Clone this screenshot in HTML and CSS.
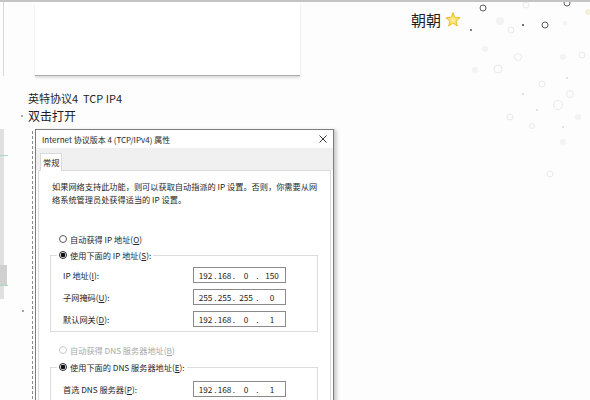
FILE: index.html
```html
<!DOCTYPE html>
<html lang="zh-CN">
<head>
<meta charset="utf-8">
<title>TCP/IPv4</title>
<link rel="stylesheet" href="styles.css">
</head>
<body>
<div class="screen">
  <div class="top"><div class="paper"></div></div>

  <div class="notes">
    <p class="note note-a">英特协议4&nbsp;&nbsp;TCP IP4</p>
    <p class="note note-b"><span class="bullet"></span>双击打开</p>
  </div>

  <div class="workspace">
    <div class="edge"></div>
    <div class="gutter"><span class="dot"></span></div>
    <div class="rail"></div>
    <div class="dialog">
      <div class="titlebar">
        <span class="title">Internet 协议版本 4 (TCP/IPv4) 属性</span>
        <svg class="close" width="8" height="8" viewBox="0 0 8 8"><path d="M0.5 0.5L7.5 7.5M7.5 0.5L0.5 7.5" stroke="#3a3a3a" stroke-width="1" fill="none"/></svg>
      </div>
      <div class="tabstrip"><span class="tab">常规</span></div>
      <div class="pane">
        <p class="intro">如果网络支持此功能，则可以获取自动指派的 IP 设置。否则，你需要从网<br>络系统管理员处获得适当的 IP 设置。</p>

        <div class="radio first"><span class="rb"></span>自动获得 IP 地址(<u>O</u>)</div>
        <fieldset class="group">
          <legend class="radio"><span class="rb on"></span>使用下面的 IP 地址(<u>S</u>):</legend>
          <div class="rows">
            <span class="lbl">IP 地址(<u>I</u>):</span>
            <span class="ip"><i>192</i><b>.</b><i>168</i><b>.</b><i>0</i><b>.</b><i>150</i></span>
            <span class="lbl">子网掩码(<u>U</u>):</span>
            <span class="ip"><i>255</i><b>.</b><i>255</i><b>.</b><i>255</i><b>.</b><i>0</i></span>
            <span class="lbl">默认网关(<u>D</u>):</span>
            <span class="ip"><i>192</i><b>.</b><i>168</i><b>.</b><i>0</i><b>.</b><i>1</i></span>
          </div>
        </fieldset>

        <div class="radio off"><span class="rb"></span>自动获得 DNS 服务器地址(<u>B</u>)</div>
        <fieldset class="group">
          <legend class="radio"><span class="rb on"></span>使用下面的 DNS 服务器地址(<u>E</u>):</legend>
          <div class="rows dns">
            <span class="lbl">首选 DNS 服务器(<u>P</u>):</span>
            <span class="ip"><i>192</i><b>.</b><i>168</i><b>.</b><i>0</i><b>.</b><i>1</i></span>
          </div>
        </fieldset>
      </div>
    </div>
  </div>

  <div class="badge">
    <span class="name">朝朝</span>
    <svg class="star" width="16" height="16" viewBox="0 0 16 16">
      <defs>
        <radialGradient id="sg" cx="50%" cy="55%" r="60%">
          <stop offset="0" stop-color="#fff3a8"/>
          <stop offset="1" stop-color="#f3c21c"/>
        </radialGradient>
      </defs>
      <polygon points="8,0.5 9.94,5.33 15.13,5.68 11.14,9.02 12.41,14.07 8,11.3 3.59,14.07 4.86,9.02 0.87,5.68 6.06,5.33" fill="url(#sg)" stroke="#e7b20f" stroke-width="0.7" stroke-linejoin="round"/>
    </svg>
  </div>

  <svg class="sparkles" width="130" height="180" viewBox="0 0 130 180">
    <g fill="none" stroke="#4a4a4a" stroke-width="0.9">
      <circle cx="23" cy="6" r="3"/>
      <circle cx="85" cy="23" r="3"/>
      <circle cx="107" cy="1" r="3"/>
    </g>
    <g fill="#444">
      <circle cx="11" cy="28" r="0.9"/>
      <circle cx="63" cy="23" r="1"/>
    </g>
    <g fill="none" stroke="#e6e6e6" stroke-width="0.9">
      <circle cx="66" cy="3" r="3"/>
      <circle cx="51" cy="28" r="3"/>
      <circle cx="58" cy="55" r="3.5"/>
      <circle cx="122" cy="53" r="3"/>
      <circle cx="38" cy="67" r="4"/>
      <circle cx="82" cy="82" r="3"/>
      <circle cx="110" cy="92" r="3.5"/>
      <circle cx="98" cy="103" r="4.5"/>
      <circle cx="50" cy="115" r="3"/>
      <circle cx="90" cy="172" r="3"/>
      <circle cx="72" cy="124" r="2.5"/>
    </g>
    <g fill="#f3f3f3">
      <circle cx="40" cy="19" r="4"/>
      <circle cx="105" cy="21" r="2"/>
      <circle cx="25" cy="47" r="3"/>
      <circle cx="15" cy="68" r="3"/>
      <circle cx="103" cy="55" r="3"/>
      <circle cx="118" cy="115" r="3"/>
      <circle cx="103" cy="140" r="3"/>
    </g>
    <circle cx="128" cy="10" r="3" fill="#f5f1d6"/>
    <g fill="#d4d4d4">
      <circle cx="63" cy="92" r="0.9"/>
      <circle cx="107" cy="76" r="0.9"/>
      <circle cx="77" cy="108" r="0.9"/>
      <circle cx="103" cy="125" r="0.9"/>
    </g>
  </svg>
</div>
</body>
</html>
```

FILE: styles.css
```css
* { box-sizing: border-box; }

html, body {
  margin: 0;
  padding: 0;
  background: #fdfdfd;
}

body {
  font-family: "Noto Sans CJK SC", "Noto Sans", sans-serif;
  color: #222;
}

.screen {
  position: relative;
  width: 590px;
  height: 400px;
  overflow: hidden;
  background: #fdfdfd;
  border-top: 2px solid #c4c4c4;
}

/* top paper sheet */
.top {
  height: 74px;
  margin-left: 3px;
  border-left: 1px solid #d8d8d8;
  padding-left: 31px;
}

.paper {
  width: 265px;
  height: 74px;
  background: #fff;
  border-bottom: 1px solid #a9a9a9;
  box-shadow: 0 2px 2px rgba(0, 0, 0, 0.12);
}

/* notes */
.notes {
  padding-left: 21px;
  margin-top: 14px;
}

.note {
  margin: 0;
  display: flex;
  align-items: center;
  white-space: pre;
  color: #1e1e1e;
}

.note-a {
  font-size: 11px;
  line-height: 16px;
  padding-left: 7px;
}

.note-b {
  font-size: 12px;
  line-height: 18px;
  margin-top: 1px;
}

.bullet {
  width: 2px;
  height: 2px;
  border-radius: 50%;
  background: #8a8a8a;
  margin-right: 5px;
}

/* workspace with dialog */
.workspace {
  display: flex;
  margin-top: 4px;
  height: 280px;
}

.edge {
  flex: none;
  width: 8px;
  height: 170px;
  background:
    linear-gradient(#a6dcc4, #a6dcc4) 0 26px / 8px 1px no-repeat,
    linear-gradient(#a6dcc4, #a6dcc4) 0 156px / 8px 1px no-repeat,
    linear-gradient(#d0d0d0, #d0d0d0) 0 136px / 7px 20px no-repeat,
    linear-gradient(#e0e0e0, #e0e0e0) 0 0 / 4px 100% no-repeat;
}

.gutter {
  flex: none;
  width: 24px;
  padding: 181px 0 0 14px;
}

.dot {
  display: block;
  width: 2px;
  height: 2px;
  border-radius: 50%;
  background: #8a8a8a;
}

.rail {
  flex: none;
  width: 3px;
  margin-top: 2px;
  border-left: 1px dashed #8c8c8c;
}

.dialog {
  flex: none;
  width: 299px;
  height: 290px;
  background: #fff;
  border: 1px solid #7d7d7d;
  box-shadow: 1px 0 0 #cfcfcf, 3px 1px 3px rgba(0, 0, 0, 0.18);
  font-size: 8.2px;
  color: #262626;
}

.titlebar {
  height: 18px;
  display: flex;
  align-items: center;
  justify-content: space-between;
  padding: 0 6px 0 6px;
  font-size: 8px;
}

.close {
  display: block;
}

.tabstrip {
  height: 22px;
  background: #f0f0f0;
  padding: 5px 0 0 4px;
  display: flex;
  align-items: flex-start;
}

.tab {
  position: relative;
  height: 18px;
  margin-bottom: -1px;
  padding: 0 2px;
  background: #fff;
  border: 1px solid #dadada;
  border-bottom: none;
  line-height: 16px;
}

.pane {
  margin: 0 2px;
  height: 260px;
  border: 1px solid #dadada;
  padding: 9px 12px 0 13px;
}

.intro {
  margin: 0;
  line-height: 13px;
  white-space: nowrap;
}

.radio {
  display: flex;
  align-items: center;
  height: 16px;
  line-height: 16px;
  padding-left: 7px;
  white-space: nowrap;
}

.radio.first {
  margin-top: 25px;
}

.rb {
  flex: none;
  width: 8px;
  height: 8px;
  border: 1px solid #5a5a5a;
  border-radius: 50%;
  margin-right: 3px;
  background: #fff;
}

.rb.on {
  border-color: #222;
  background: radial-gradient(circle, #111 0 2px, #fff 2.6px);
}

.radio.off {
  color: #a8a8a8;
  margin-top: 10px;
}

.radio.off .rb {
  border-color: #c8c8c8;
}

.group {
  margin: 0 0 0 -2px;
  width: 268px;
  min-width: 0;
  border: 1px solid #dcdcdc;
  padding: 0 0 4px 0;
}

.radio.off + .group {
  margin-top: 1px;
}

.group legend.radio {
  margin-left: 6px;
  padding: 0 2px;
}

.rows {
  display: grid;
  grid-template-columns: 130px 93px;
  row-gap: 6px;
  align-items: center;
  padding: 4px 0 0 12px;
}

.rows.dns {
  padding-top: 6px;
}

.lbl {
  white-space: nowrap;
  line-height: 16px;
}

.ip {
  height: 16px;
  border: 1px solid #8a8a8a;
  display: grid;
  grid-template-columns: 17px 3px 15px 4px 20px 3px 26px;
  align-items: center;
  padding-left: 3px;
  line-height: 14px;
  color: #222;
}

.ip i, .ip b {
  font-style: normal;
  font-weight: normal;
  text-align: center;
}

/* watermark name */
.badge {
  position: absolute;
  left: 411px;
  top: 8px;
  display: flex;
  align-items: center;
  gap: 4px;
}

.name {
  font-size: 15px;
  line-height: 20px;
  color: #1e1e1e;
}

.star {
  display: block;
}

.sparkles {
  position: absolute;
  left: 460px;
  top: 0;
}
```
